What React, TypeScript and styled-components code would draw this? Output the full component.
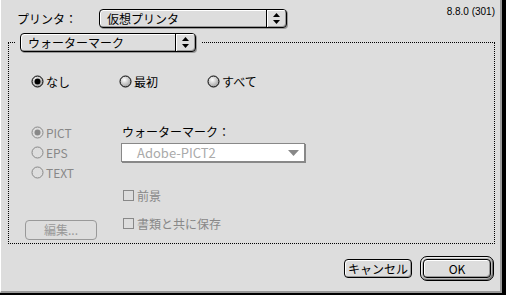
import React from "react";
import styled, { createGlobalStyle } from "styled-components";

const GlobalStyle = createGlobalStyle`
  html, body {
    margin: 0;
    padding: 0;
    background: #dddddd;
  }
  body {
    font-family: "Noto Sans CJK JP", "Noto Sans", sans-serif;
    font-size: 12px;
    color: #000;
  }
  * {
    box-sizing: border-box;
  }
`;

const Frame = styled.div`
  width: 506px;
  height: 295px;
  background: #000;
  padding: 0 4px 2px 0;
`;

const Window = styled.div`
  width: 100%;
  height: 100%;
  background: #dddddd;
  border-left: 1px solid #ffffff;
  border-right: 2px solid #999999;
  border-bottom: 2px solid #999999;
  display: flex;
  flex-direction: column;
`;

const Header = styled.div`
  display: flex;
  align-items: center;
  height: 19px;
  margin-top: 9px;
  padding: 0 5px 0 16px;
`;

const Label = styled.span`
  width: 82px;
  line-height: 19px;
  white-space: nowrap;
`;

const Version = styled.span`
  margin-left: auto;
  align-self: flex-start;
  margin-top: -3px;
  font-family: "Liberation Sans", Arial, sans-serif;
  font-size: 10px;
`;

const Popup = styled.div<{ $w: number }>`
  display: flex;
  width: ${(p) => p.$w}px;
  height: 19px;
  border: 1px solid #000;
  border-radius: 4px;
  background: #dddddd;
  box-shadow: inset 1px 1px 0 #fff, inset -1px -1px 0 #999, 1px 1px 0 #999;
  overflow: hidden;
`;

const PopupText = styled.span`
  flex: 1;
  padding-left: 7px;
  line-height: 17px;
  white-space: nowrap;
`;

const PopupArrows = styled.span`
  width: 20px;
  border-left: 1px solid #000;
  display: flex;
  align-items: center;
  justify-content: center;
  box-shadow: inset 1px 1px 0 #fff;
`;

const Group = styled.fieldset`
  margin: 5px 0 0 7px;
  width: 487px;
  height: 211px;
  border: 1px dotted #000;
  padding: 0;
  min-width: 0;
`;

const Legend = styled.legend`
  margin-left: 6px;
  padding: 0 5px;
`;

const Body = styled.div`
  padding-left: 16px;
`;

const RadioRow = styled.div`
  display: flex;
  margin-top: 22px;
  padding-left: 6px;
  height: 14px;
`;

const Choice = styled.label<{ $w?: number; $disabled?: boolean }>`
  display: flex;
  align-items: center;
  gap: 2px;
  width: ${(p) => (p.$w ? `${p.$w}px` : "auto")};
  color: ${(p) => (p.$disabled ? "#888" : "#000")};
  white-space: nowrap;
`;

const Lower = styled.div`
  display: flex;
  margin-top: 34px;
`;

const LeftCol = styled.div`
  width: 96px;
  display: flex;
  flex-direction: column;
`;

const FormatItem = styled.div`
  height: 20px;
  padding-left: 6px;
  display: flex;
  align-items: center;
`;

const RightCol = styled.div`
  display: flex;
  flex-direction: column;
`;

const FieldLabel = styled.div`
  height: 20px;
  line-height: 20px;
  padding-left: 1px;
`;

const DisabledPopup = styled.div`
  margin-top: 1px;
  width: 184px;
  height: 19px;
  background: #fff;
  border: 1px solid #888;
  box-shadow: 1px 1px 0 #888;
  display: flex;
  align-items: center;
  justify-content: space-between;
  padding: 0 5px 0 15px;
  color: #aaa;
  font-size: 13px;
`;

const CheckRow = styled.label<{ $top: number }>`
  display: flex;
  align-items: center;
  gap: 3px;
  height: 19px;
  margin-top: ${(p) => p.$top}px;
  padding-left: 2px;
  color: #888;
`;

const Box = styled.span`
  width: 11px;
  height: 11px;
  border: 1px solid #888;
`;

const EditButton = styled.div`
  margin-top: 38px;
  width: 72px;
  height: 20px;
  border: 1px solid #999;
  border-radius: 4px;
  color: #999;
  text-align: center;
  line-height: 18px;
`;

const ButtonBar = styled.div`
  display: flex;
  justify-content: flex-end;
  align-items: center;
  gap: 8px;
  margin-top: 12px;
  padding-right: 6px;
`;

const Button = styled.div<{ $w: number }>`
  width: ${(p) => p.$w}px;
  height: 19px;
  border: 1px solid #000;
  border-radius: 4px;
  background: #dddddd;
  box-shadow: inset 1px 1px 0 #fff, inset -1px -1px 0 #999;
  text-align: center;
  line-height: 17px;
  white-space: nowrap;
`;

const DefaultRing = styled.div`
  padding: 2px;
  border: 1px solid #000;
  border-radius: 7px;
  background: #bbbbbb;
  box-shadow: inset 1px 1px 0 #eee, inset -1px -1px 0 #777;
`;

function Arrows() {
  return (
    <svg width="7" height="11" viewBox="0 0 7 11">
      <path d="M3.5 0 L7 4 L0 4 Z" fill="#000" />
      <path d="M0 7 L7 7 L3.5 11 Z" fill="#000" />
    </svg>
  );
}

function Radio({ on, disabled }: { on?: boolean; disabled?: boolean }) {
  const id = `g${on ? 1 : 0}${disabled ? 1 : 0}`;
  return (
    <svg width="13" height="13" viewBox="0 0 13 13">
      <defs>
        <radialGradient id={id} cx="0.4" cy="0.35" r="0.7">
          <stop offset="0" stopColor="#ffffff" />
          <stop offset="1" stopColor={disabled ? "#dddddd" : "#9a9a9a"} />
        </radialGradient>
      </defs>
      <circle
        cx="6.5"
        cy="6.5"
        r="5.5"
        fill={disabled ? "#dddddd" : `url(#${id})`}
        stroke={disabled ? "#888" : "#000"}
      />
      {on && <circle cx="6.5" cy="6.5" r="3" fill={disabled ? "#888" : "#000"} />}
    </svg>
  );
}

export default function App() {
  return (
    <>
      <GlobalStyle />
      <Frame>
        <Window>
          <Header>
            <Label>プリンタ：</Label>
            <Popup $w={188}>
              <PopupText>仮想プリンタ</PopupText>
              <PopupArrows>
                <Arrows />
              </PopupArrows>
            </Popup>
            <Version>8.8.0 (301)</Version>
          </Header>

          <Group>
            <Legend>
              <Popup $w={176}>
                <PopupText>ウォーターマーク</PopupText>
                <PopupArrows>
                  <Arrows />
                </PopupArrows>
              </Popup>
            </Legend>
            <Body>
              <RadioRow>
                <Choice $w={88}>
                  <Radio on />
                  なし
                </Choice>
                <Choice $w={88}>
                  <Radio />
                  最初
                </Choice>
                <Choice $w={88}>
                  <Radio />
                  すべて
                </Choice>
              </RadioRow>

              <Lower>
                <LeftCol>
                  <FormatItem>
                    <Choice $disabled>
                      <Radio on disabled />
                      PICT
                    </Choice>
                  </FormatItem>
                  <FormatItem>
                    <Choice $disabled>
                      <Radio disabled />
                      EPS
                    </Choice>
                  </FormatItem>
                  <FormatItem>
                    <Choice $disabled>
                      <Radio disabled />
                      TEXT
                    </Choice>
                  </FormatItem>
                  <EditButton>編集...</EditButton>
                </LeftCol>
                <RightCol>
                  <FieldLabel>ウォーターマーク：</FieldLabel>
                  <DisabledPopup>
                    <span>Adobe-PICT2</span>
                    <svg width="11" height="6" viewBox="0 0 11 6">
                      <path d="M0 0 L11 0 L5.5 6 Z" fill="#888" />
                    </svg>
                  </DisabledPopup>
                  <CheckRow $top={24}>
                    <Box />
                    前景
                  </CheckRow>
                  <CheckRow $top={9}>
                    <Box />
                    書類と共に保存
                  </CheckRow>
                </RightCol>
              </Lower>
            </Body>
          </Group>

          <ButtonBar>
            <Button $w={68}>キャンセル</Button>
            <DefaultRing>
              <Button $w={68}>OK</Button>
            </DefaultRing>
          </ButtonBar>
        </Window>
      </Frame>
    </>
  );
}
